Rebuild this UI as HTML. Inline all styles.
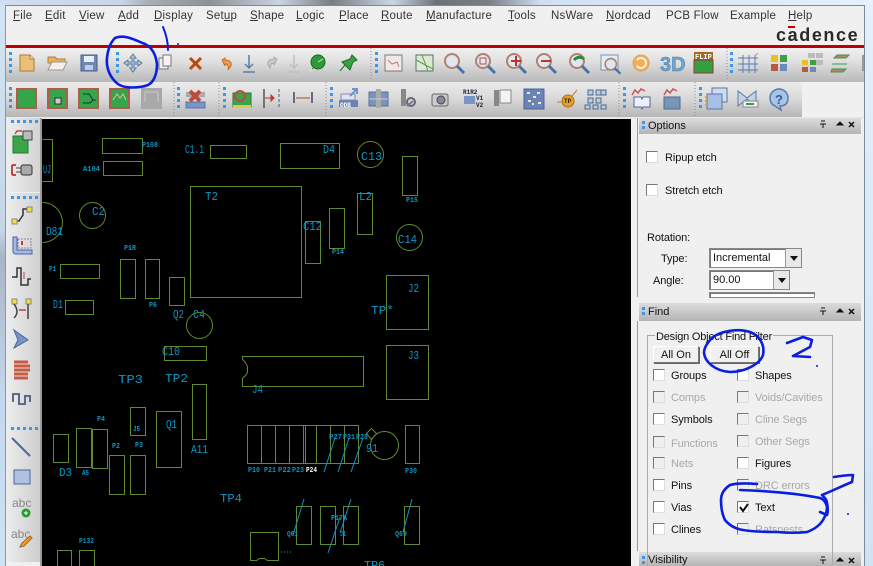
<!DOCTYPE html>
<html><head><meta charset="utf-8"><style>
html,body{margin:0;padding:0;background:#f0f0f0}
#r{position:relative;width:873px;height:566px;overflow:hidden;background:#f0f0f0;font-family:"Liberation Sans",sans-serif;color:#111}
#r>div,#r>svg{position:absolute}
.m{top:10px;font-size:11.5px;letter-spacing:.2px;color:#333;white-space:nowrap}
.m u{text-decoration:underline}
.l{font-size:11px;letter-spacing:-.1px;color:#111;white-space:nowrap;margin-top:1.5px}
.g{color:#a8a8a8}
.cb{width:10px;height:10px;background:#fff;border:1px solid #777;border-right-color:#ddd;border-bottom-color:#ddd}
.cd{background:#efefef}
.hd{left:639px;width:222px;background:linear-gradient(#dcdcdc,#b4b4b4);font-size:11px}
.hd span{position:absolute;left:9px;top:0;line-height:15px;color:#111;margin-top:1px}
.btn{background:#f0f0f0;border:1px solid #777;border-left-color:#fff;border-top-color:#fff;text-align:center;font-size:11px;line-height:16px;box-shadow:1px 1px 0 #666}
.dd{background:#fff;border:1px solid #888;font-size:11px;line-height:18px;padding-left:3px;box-sizing:border-box;box-shadow:inset 1px 1px 0 #777}
.ar{position:absolute;right:0;top:0;width:16px;height:100%;background:#e8e8e8;border-left:1px solid #999;box-sizing:border-box}
.ar:after{content:"";position:absolute;left:4px;top:7px;border:4px solid transparent;border-top:5px solid #111}
</style></head><body><div id="r">
<!-- glass -->
<div style="left:0;top:0;width:873px;height:5px;background:linear-gradient(90deg,#cfdff0 0,#c6d6e6 14%,#a9adb5 17%,#8e9299 24%,#c9d4e0 32%,#7a7d84 38%,#c9d6e4 45%,#6d7078 50%,#7b7f88 56%,#cfe0f2 62%,#e6f1fb 100%)"></div>
<div style="left:0;top:5px;width:5px;height:561px;background:linear-gradient(#d3e4f4,#c4d6e8 40%,#a9b5c4 45%,#c3d8ee 70%,#cfe2f5)"></div>
<div style="left:865px;top:5px;width:8px;height:561px;background:linear-gradient(#e4f0fa,#cfe3f6)"></div>
<div style="left:5px;top:5px;width:860px;height:1px;background:#7c8a98"></div>
<div style="left:5px;top:5px;width:1px;height:561px;background:#8a97a5"></div>
<div style="left:864px;top:5px;width:1px;height:561px;background:#7c8a98"></div>
<!-- menu -->
<div class="m" style="left:13px"><u>F</u>ile</div><div class="m" style="left:45px"><u>E</u>dit</div><div class="m" style="left:79px"><u>V</u>iew</div><div class="m" style="left:118px"><u>A</u>dd</div><div class="m" style="left:154px"><u>D</u>isplay</div><div class="m" style="left:206px">Set<u>u</u>p</div><div class="m" style="left:250px"><u>S</u>hape</div><div class="m" style="left:296px"><u>L</u>ogic</div><div class="m" style="left:339px"><u>P</u>lace</div><div class="m" style="left:381px"><u>R</u>oute</div><div class="m" style="left:426px"><u>M</u>anufacture</div><div class="m" style="left:508px"><u>T</u>ools</div><div class="m" style="left:551px">NsWare</div><div class="m" style="left:606px"><u>N</u>ordcad</div><div class="m" style="left:666px">PCB Flow</div><div class="m" style="left:730px">Example</div><div class="m" style="left:788px"><u>H</u>elp</div>
<div style="left:776px;top:25px;font-size:18px;font-weight:bold;letter-spacing:1.6px;color:#2a2a2a;white-space:nowrap">cadence</div>
<div style="left:788px;top:26px;width:7px;height:2px;background:#b00"></div>
<!-- red line + toolbars -->
<div style="left:6px;top:45px;width:858px;height:3px;background:#c00000"></div>
<div style="left:6px;top:48px;width:858px;height:34px;background:linear-gradient(#f0f0f0,#e0e0e0 40%,#b8b8b8)"></div>
<div style="left:6px;top:82px;width:796px;height:35px;background:linear-gradient(#ececec,#d8d8d8 50%,#b6b6b6)"></div>
<div style="left:6px;top:117px;width:858px;height:2px;background:#e8e8e8"></div>
<!-- left toolbar -->
<div style="left:6px;top:118px;width:34px;height:74px;background:linear-gradient(90deg,#ededed,#d4d4d4)"></div>
<div style="left:6px;top:193px;width:34px;height:233px;background:linear-gradient(90deg,#ededed,#d0d0d0)"></div>
<div style="left:6px;top:425px;width:34px;height:137px;background:linear-gradient(90deg,#ededed,#cdcdcd)"></div>
<div style="left:40px;top:118px;width:2px;height:448px;background:#9c9c9c"></div>
<!-- canvas -->
<div style="left:42px;top:119px;width:589px;height:447px;background:#000"></div>
<!-- right panels -->
<div style="left:637px;top:118px;width:1px;height:179px;background:#999"></div>
<div style="left:637px;top:321px;width:1px;height:230px;background:#999"></div>
<div class="hd" style="top:118px;height:16px"><span>Options</span></div>
<div class="hd" style="top:303px;height:18px"><span style="margin-top:2px">Find</span></div>
<div class="hd" style="top:552px;height:14px"><span>Visibility</span></div>
<div class="cb" style="left:646px;top:151px"></div><div class="l" style="left:665px;top:150px">Ripup etch</div>
<div class="cb" style="left:646px;top:184px"></div><div class="l" style="left:665px;top:183px">Stretch etch</div>
<div class="l" style="left:647px;top:230px">Rotation:</div>
<div class="l" style="left:661px;top:251px">Type:</div>
<div class="dd" style="left:709px;top:248px;width:93px;height:20px">Incremental<i class="ar"></i></div>
<div class="l" style="left:653px;top:273px">Angle:</div>
<div class="dd" style="left:709px;top:270px;width:81px;height:20px">90.00<i class="ar"></i></div>
<div class="dd" style="left:709px;top:292px;width:106px;height:6px"></div>
<!-- find group -->
<div style="left:647px;top:335px;width:186px;height:231px;border:1px solid #aaa;border-bottom:0;box-sizing:border-box"></div>
<div class="l" style="left:655px;top:329px;background:#f0f0f0;padding:0 1px;letter-spacing:-.2px">Design Object Find Filter</div>
<div class="btn" style="left:653px;top:346px;width:44px;height:15px">All On</div>
<div class="btn" style="left:710px;top:346px;width:47px;height:15px">All Off</div>
<div class="cb" style="left:653px;top:369px"></div><div class="l" style="left:671px;top:368px">Groups</div>
<div class="cb cd" style="left:653px;top:391px"></div><div class="l g" style="left:671px;top:390px">Comps</div>
<div class="cb" style="left:653px;top:413px"></div><div class="l" style="left:671px;top:412px">Symbols</div>
<div class="cb cd" style="left:653px;top:436px"></div><div class="l g" style="left:671px;top:436px">Functions</div>
<div class="cb cd" style="left:653px;top:457px"></div><div class="l g" style="left:671px;top:456px">Nets</div>
<div class="cb" style="left:653px;top:479px"></div><div class="l" style="left:671px;top:478px">Pins</div>
<div class="cb" style="left:653px;top:501px"></div><div class="l" style="left:671px;top:500px">Vias</div>
<div class="cb" style="left:653px;top:523px"></div><div class="l" style="left:671px;top:522px">Clines</div>
<div class="cb" style="left:737px;top:369px"></div><div class="l" style="left:755px;top:368px">Shapes</div>
<div class="cb cd" style="left:737px;top:391px"></div><div class="l g" style="left:755px;top:390px">Voids/Cavities</div>
<div class="cb cd" style="left:737px;top:413px"></div><div class="l g" style="left:755px;top:412px">Cline Segs</div>
<div class="cb cd" style="left:737px;top:435px"></div><div class="l g" style="left:755px;top:434px">Other Segs</div>
<div class="cb" style="left:737px;top:457px"></div><div class="l" style="left:755px;top:456px">Figures</div>
<div class="cb cd" style="left:737px;top:479px"></div><div class="l g" style="left:755px;top:478px">DRC errors</div>
<div class="cb" style="left:737px;top:501px"></div><div class="l" style="left:755px;top:500px">Text</div>
<div class="cb cd" style="left:737px;top:523px"></div><div class="l g" style="left:755px;top:522px">Ratsnests</div>

<svg style="left:0;top:0" width="873" height="566" viewBox="0 0 873 566" font-family="Liberation Mono,monospace">
<defs>
<g id="mag"><circle cx="-2" cy="-2" r="7" fill="#dfe6ee" stroke="#b08070" stroke-width="2"/><path d="M3 3l7 7" stroke="#4a72a8" stroke-width="3"/></g>
<g id="hnd" fill="#3a96ee"><rect x="0" y="0" width="3" height="3"/><rect x="0" y="6" width="3" height="3"/><rect x="0" y="12" width="3" height="3"/><rect x="0" y="18" width="3" height="3"/></g>
<g id="hndh" fill="#3a96ee"><rect x="0" y="0" width="3" height="3"/><rect x="6" y="0" width="3" height="3"/><rect x="12" y="0" width="3" height="3"/><rect x="18" y="0" width="3" height="3"/><rect x="24" y="0" width="3" height="3"/></g>
</defs>
<!-- toolbar handles -->
<use href="#hnd" x="9" y="52"/><use href="#hnd" x="116" y="52"/><use href="#hnd" x="375" y="52"/><use href="#hnd" x="730" y="52"/>
<use href="#hnd" x="9" y="87"/><use href="#hnd" x="177" y="87"/><use href="#hnd" x="223" y="87"/><use href="#hnd" x="330" y="87"/><use href="#hnd" x="623" y="87"/><use href="#hnd" x="699" y="87"/>
<use href="#hndh" x="11" y="120"/><use href="#hndh" x="11" y="196"/><use href="#hndh" x="11" y="427"/>
<path d="M371 48v33M727 48v33M174 82v35M219 82v35M326 82v35M619 82v35M695 82v35" stroke="#8e8e9e" stroke-dasharray="1 2"/>
<!-- toolbar 1 icons -->
<path d="M20 55h10l4 4v12H20z" fill="#e8c078" stroke="#b07830"/><path d="M30 55v4h4" fill="#f8e8c0" stroke="#b07830"/>
<path d="M48 57h7l2 2h8v4H48z" fill="#e8b060" stroke="#b08040"/><path d="M48 70l4-8h15l-4 8z" fill="#f4f0e4" stroke="#999"/>
<rect x="81" y="55" width="16" height="16" fill="#6e86b8" stroke="#4a5f8c"/><rect x="84" y="56" width="10" height="6" fill="#e8eef8"/><rect x="85" y="65" width="8" height="5" fill="#c0cce0"/>
<path d="M133 54l3 4h-2v4h4v-2l4 3-4 3v-2h-4v4h2l-3 4-3-4h2v-4h-4v2l-4-3 4-3v2h4v-4h-2z" fill="#b4cce4" stroke="#5a7a9c"/>
<rect x="159" y="58" width="9" height="11" fill="#eee" stroke="#777"/><rect x="163" y="55" width="8" height="11" fill="#f4f4f4" stroke="#777"/>
<path d="M190 58l11 11M201 58l-11 11" stroke="#b84810" stroke-width="3"/>
<path d="M222 60l3-2v2c5 0 7 3 6 6l-3 4c1-3 0-6-3-6v2z" fill="#e8a050" stroke="#c07020"/>
<path d="M249 55v12M245 64l4 4 4-4M243 72h12" stroke="#5a7ea8" stroke-width="1.5" fill="none"/>
<path d="M277 59l-3-2v2c-5 0-7 3-6 6l2 3c0-3 1-5 4-5v2z" fill="#c8c8c8" stroke="#aaa"/>
<path d="M294 55v12M290 64l4 4 4-4M288 72h12" stroke="#c0c0c0" stroke-width="1.5" fill="none"/>
<circle cx="318" cy="62" r="7" fill="#2f9a35" stroke="#166a20"/><path d="M312 68l-2 3 4-2M318 62l5-3" stroke="#d0f0d0"/>
<path d="M340 71l5-6M345 65l-3-3 8-3 2-4 5 5-4 2-3 8z" fill="#3aa040" stroke="#1e7028"/>
<rect x="385" y="55" width="17" height="16" fill="#f2e8e4" stroke="#7a7a8a"/><path d="M388 60l4 4 5-2 2 5" stroke="#b08078" fill="none"/>
<rect x="416" y="55" width="17" height="16" fill="#dcead4" stroke="#5a7070"/><path d="M416 60l17 9M422 55l6 16" stroke="#5a9a4a"/>
<use href="#mag" x="454" y="63"/><use href="#mag" x="485" y="63"/><use href="#mag" x="516" y="63"/><use href="#mag" x="546" y="63"/><use href="#mag" x="579" y="63"/>
<path d="M511 61h10M516 56v10" stroke="#c03030" stroke-width="2"/><path d="M541 61h10" stroke="#c03030" stroke-width="2"/><rect x="480" y="58" width="6" height="6" fill="none" stroke="#b05050"/>
<path d="M574 60q5-5 10-1" stroke="#2a8a40" stroke-width="3" fill="none"/>
<rect x="601" y="55" width="17" height="15" fill="#e4ecf4" stroke="#7a94b0"/><use href="#mag" x="613" y="66" transform="translate(122 13) scale(.8)"/>
<circle cx="641" cy="63" r="8" fill="#f0b060" stroke="#e0a050"/><path d="M637 60a5 5 0 1 1 0 6" stroke="#fff" stroke-width="1.5" fill="none"/>
<text x="660" y="71" font-size="20" font-weight="bold" fill="#6ea4cc" stroke="#4a80b0" stroke-width=".5" font-family="Liberation Sans,sans-serif">3D</text>
<rect x="694" y="52" width="19" height="8" fill="#a06a20"/><text x="695" y="59" font-size="7" font-weight="bold" fill="#fff">FLIP</text><rect x="694" y="60" width="19" height="13" fill="#30a040" stroke="#a03030"/>
<path d="M738 58h20M738 64h20M738 70h20M743 55v18M749 55v18M755 55v18" stroke="#5a7cb0"/><path d="M755 56l3-3" stroke="#e09040"/>
<rect x="771" y="55" width="7" height="7" fill="#e8c020"/><rect x="780" y="55" width="7" height="7" fill="#40a040"/><rect x="771" y="64" width="7" height="7" fill="#b85a40"/><rect x="780" y="64" width="7" height="7" fill="#6a8abc"/>
<rect x="802" y="60" width="6" height="5" fill="#e8c020"/><rect x="810" y="60" width="6" height="5" fill="#40a040"/><rect x="802" y="67" width="6" height="5" fill="#b85a40"/><rect x="810" y="67" width="6" height="5" fill="#6a8abc"/><rect x="808" y="53" width="7" height="5" fill="#bbb"/><rect x="816" y="53" width="7" height="5" fill="#bbb"/><rect x="816" y="60" width="7" height="5" fill="#bbb"/>
<path d="M834 58h12l3-3h-12zM832 64h15M832 69h14l-3 3h-12z" fill="#c0806a" stroke="#3a9a48"/><rect x="862" y="55" width="2" height="16" fill="#999"/>
<!-- toolbar 2 -->
<rect x="16" y="88" width="21" height="21" fill="#b05a50"/><rect x="18" y="90" width="17" height="17" fill="#36a448"/>
<rect x="47" y="88" width="21" height="21" fill="#b05a50"/><rect x="49" y="90" width="17" height="17" fill="#36a448"/><rect x="55" y="98" width="6" height="6" fill="#ccc" stroke="#333"/>
<rect x="78" y="88" width="21" height="21" fill="#b05a50"/><rect x="80" y="90" width="17" height="17" fill="#36a448"/><path d="M83 94h6l4 6h3M83 103h7l3-3" stroke="#134" fill="none"/>
<rect x="109" y="88" width="21" height="21" fill="#b05a50"/><rect x="111" y="90" width="17" height="17" fill="#36a448"/><path d="M113 100l4-6 3 4 3-4 3 6" stroke="#e8b8a0" fill="none"/>
<rect x="141" y="88" width="21" height="21" fill="#a9a9a9"/><path d="M145 102v-10h13v10" stroke="#ccc" fill="none"/>
<rect x="186" y="92" width="19" height="5" fill="#aaa"/><path d="M190 91l10 10M200 91l-10 10" stroke="#c04a40" stroke-width="4"/><rect x="186" y="102" width="19" height="6" fill="#7a94c8" stroke="#5a74a8"/>
<rect x="233" y="93" width="18" height="14" fill="#3aa548" stroke="#2a7a38"/><rect x="233" y="105" width="18" height="3" fill="#e0c850"/><circle cx="240" cy="96" r="5" fill="none" stroke="#c04a40" stroke-width="2"/>
<path d="M264 89v19" stroke="#555" stroke-width="1.5"/><path d="M265 98h9l-3-3v6l3-3" stroke="#b83a30" fill="#b83a30"/><path d="M279 89v19" stroke="#557" stroke-dasharray="3 2"/>
<path d="M294 92v11M312 92v11" stroke="#446" stroke-width="1.5"/><path d="M296 98h14" stroke="#b83a30"/>
<rect x="339" y="100" width="19" height="7" fill="#6a84b0"/><text x="340" y="107" font-size="6" font-weight="bold" fill="#fff">ODB</text><rect x="341" y="94" width="14" height="6" fill="#dfe4ec" stroke="#88a"/><path d="M350 96l6-6M352 89h5v5" stroke="#6a94d0" stroke-width="2" fill="none"/>
<rect x="369" y="92" width="19" height="14" fill="#7a94bc" stroke="#5a6f99"/><rect x="376" y="89" width="5" height="19" fill="#aaa"/><path d="M369 99h19" stroke="#ccd"/>
<rect x="401" y="89" width="5" height="17" fill="#888"/><circle cx="411" cy="102" r="4" fill="none" stroke="#667" stroke-width="2"/><path d="M407 106l6-5" stroke="#778" stroke-width="2"/>
<rect x="432" y="94" width="16" height="12" rx="2" fill="#ccc" stroke="#666"/><circle cx="441" cy="100" r="4" fill="#889" stroke="#444"/>
<text x="463" y="94" font-size="6" font-weight="bold" fill="#223">R1R2</text><text x="476" y="100" font-size="6" font-weight="bold" fill="#223">V1</text><text x="476" y="107" font-size="6" font-weight="bold" fill="#223">V2</text><rect x="464" y="96" width="11" height="8" fill="#7a94c8"/>
<rect x="494" y="90" width="5" height="16" fill="#888"/><rect x="500" y="90" width="11" height="13" fill="#f4f4f4" stroke="#888"/>
<rect x="524" y="89" width="20" height="20" fill="#6a84b8" stroke="#4a649a"/><path d="M527 93h3M533 97h3M528 101h3M537 93h3M538 103h3M532 104h2" stroke="#f0e8c0" stroke-width="2"/>
<circle cx="568" cy="101" r="6" fill="#e8a020" stroke="#a87018"/><text x="564" y="103" font-size="6" font-weight="bold" fill="#222">TP</text><path d="M557 102h5M572 96l5-6" stroke="#c08030"/>
<path d="M588 90h5v5h-5zM596 90h5v5h-5zM588 98h5v5h-5zM596 98h5v5h-5zM585 105h5v4h-5zM593 105h5v4h-5zM601 105h5v4h-5zM601 90h5v5h-5z" fill="#bcd" stroke="#4a6a90"/>
<path d="M632 95l3-5 3 3 3-4 4 2" stroke="#c05a50" fill="none" stroke-width="1.5"/><path d="M634 97h7l1 2 1-2h7v10h-7l-1 2-1-2h-7z" fill="#eef" stroke="#4a6a90"/>
<path d="M664 95l3-5 3 3 3-4 4 2" stroke="#c05a50" fill="none" stroke-width="1.5"/><rect x="664" y="97" width="16" height="12" fill="#7a94b8" stroke="#4a6a90"/>
<rect x="712" y="88" width="15" height="14" fill="#cfdcf0" stroke="#5a74a8"/><rect x="707" y="94" width="15" height="15" fill="#a8c0e8" stroke="#5a74a8"/><path d="M706 96v11" stroke="#e0a040" stroke-dasharray="2 2" stroke-width="2"/>
<path d="M738 91l9 7 9-7v15l-9-7-9 7z" fill="#c4d4e8" stroke="#5a7aa0"/><rect x="743" y="101" width="15" height="6" fill="#f0f0f0" stroke="#888"/><rect x="746" y="103" width="8" height="2" fill="#30a050"/>
<path d="M770 98a9 9 0 1 1 18 0q0 8-8 8l1 4-6-4q-5-2-5-8z" fill="#a8c4e8" stroke="#5a7aa8" stroke-width="1.5"/><text x="775" y="104" font-size="13" font-weight="bold" fill="#3a5a88" font-family="Liberation Sans,sans-serif">?</text>
<!-- left toolbar icons -->
<rect x="13" y="136" width="15" height="17" fill="#3aa548" stroke="#1e7a30"/><rect x="23" y="131" width="9" height="9" fill="#bbb" stroke="#444"/><path d="M22 131h-5l-2 3" stroke="#c04a40" fill="none" stroke-width="1.5"/>
<rect x="21" y="165" width="11" height="10" rx="2" fill="#aaa" stroke="#333"/><path d="M12 165h4M12 175h4M12 165v10" stroke="#c04a40" stroke-width="2" fill="none"/><path d="M16 168h5M16 172h5" stroke="#444"/>
<path d="M15 221h4l4-6v-6h6" stroke="#333" stroke-width="1.5" fill="none"/><rect x="12" y="219" width="5" height="5" fill="#f0e040" stroke="#888"/><rect x="27" y="207" width="5" height="5" fill="#f0e040" stroke="#888"/>
<path d="M13 237v14q0 3 3 3h16v-4H17v-13z" fill="#a8b8e0" stroke="#4a64a0"/><rect x="18" y="239" width="13" height="9" fill="none" stroke="#88a" stroke-dasharray="2 1"/><path d="M22 241v4" stroke="#c04040" stroke-width="2"/>
<path d="M12 277h5v-9h4v17h7v-6h3" stroke="#333" stroke-width="1.5" fill="none"/><path d="M24 272v7" stroke="#c04040"/>
<rect x="12" y="299" width="5" height="5" fill="#f0e040" stroke="#888"/><rect x="26" y="299" width="5" height="5" fill="#f0e040" stroke="#888"/><path d="M14 304q6 8 0 14M28 304v15" stroke="#444" stroke-width="1.5" fill="none"/><path d="M19 310h7" stroke="#c04040" stroke-width="1.5"/>
<path d="M14 330l14 10-14 8 4-8z" fill="#7a94c8" stroke="#4a64a0"/>
<path d="M14 362h14M14 366h16M14 370h16M14 374h14M14 378h14" stroke="#c85a40" stroke-width="3"/>
<path d="M13 402v-8h6v10h6v-8h5v6" stroke="#5a6a88" stroke-width="2" fill="none"/>
<path d="M12 438l18 18" stroke="#4a6a9c" stroke-width="2"/>
<rect x="14" y="470" width="16" height="14" fill="#b0c0e0" stroke="#4a64a0"/>
<text x="12" y="507" font-size="12" fill="#888" font-family="Liberation Sans,sans-serif">abc</text><circle cx="26" cy="513" r="4.5" fill="#2a9a30"/><path d="M24 513h4M26 511v4" stroke="#fff"/>
<text x="11" y="538" font-size="12" fill="#888" font-family="Liberation Sans,sans-serif">abc</text><path d="M20 547l2-4 8-7 2 2-8 8z" fill="#f0a030" stroke="#a06020"/>
<!-- panel header icons -->
<g id="hi" stroke="#111" fill="#111"><path d="M820 124h6M823 124v4M821 121h4" stroke-width="1" fill="none"/><path d="M837 125l3-3 3 3z"/><path d="M849 122l5 5M854 122l-5 5" stroke-width="1.5"/></g>
<use href="#hi" y="187"/><use href="#hi" y="436"/>
<rect x="642" y="121" width="3" height="3" fill="#3a96ee"/><rect x="642" y="126" width="3" height="3" fill="#3a96ee"/>
<rect x="642" y="307" width="3" height="3" fill="#3a96ee"/><rect x="642" y="312" width="3" height="3" fill="#3a96ee"/>
<rect x="642" y="556" width="3" height="3" fill="#3a96ee"/><rect x="642" y="561" width="3" height="3" fill="#3a96ee"/>
<path d="M740 507l3 4 5-7" stroke="#111" stroke-width="2" fill="none"/>
<!-- PCB -->
<g fill="none" stroke="#5f8a2f" stroke-width="1" transform="translate(.5 .5)">
<path d="M42 139h10v42H42"/><rect x="102" y="138" width="40" height="15"/><rect x="103" y="161" width="39" height="14"/><rect x="210" y="145" width="36" height="13"/><rect x="190" y="186" width="111" height="111"/><rect x="280" y="143" width="59" height="25"/>
<circle cx="370" cy="154" r="13"/><rect x="402" y="156" width="15" height="39"/><rect x="357" y="193" width="15" height="41"/><rect x="329" y="208" width="15" height="40"/><rect x="305" y="221" width="15" height="42"/><circle cx="409" cy="237" r="13"/><rect x="386" y="275" width="42" height="54"/>
<path d="M42 202a20 20 0 0 1 0 40"/><circle cx="92" cy="215" r="13"/><rect x="60" y="264" width="39" height="14"/><rect x="120" y="259" width="15" height="39"/><rect x="145" y="259" width="14" height="39"/><rect x="169" y="277" width="15" height="28"/><rect x="65" y="300" width="28" height="14"/><circle cx="199" cy="325" r="13"/>
<rect x="164" y="346" width="42" height="14"/><rect x="192" y="384" width="14" height="55"/><rect x="156" y="411" width="25" height="56"/><rect x="130" y="407" width="15" height="28"/><rect x="53" y="434" width="15" height="28"/><rect x="76" y="428" width="15" height="39"/><rect x="92" y="429" width="15" height="39"/><rect x="109" y="455" width="15" height="39"/><rect x="130" y="455" width="15" height="39"/>
<path d="M57 566v-16h14v16M79 566v-16h15v16"/>
<rect x="386" y="345" width="42" height="54"/>
<path d="M242 356h121v30H242v-8l3-3 2-3v-6l-2-4-3-3z"/>
<path d="M247 425h111v38H247zM261 425v38M275 425v38M289 425v38M303 425v38M305 425v38M316 425v38M330 425v38M344 425v38"/>
<circle cx="384" cy="445" r="14"/><path d="M366 433l5-5 5 5-5 6z"/><rect x="405" y="425" width="14" height="38"/>
<rect x="296" y="506" width="15" height="38"/><rect x="320" y="506" width="15" height="38"/><rect x="343" y="506" width="15" height="38"/><rect x="404" y="506" width="15" height="38"/>
<path d="M250 532h28v28h-11l-3-2h-5l-3 2h-6z"/>
</g>
<g fill="none" stroke="#0b96c4" stroke-width="1">
<path d="M324 472l11-34M338 472l11-34M351 472l12-34M293 535l11-36M328 553l12-36M340 533l11-34M403 532l9-33"/>
</g>
<path d="M278 552h1M281 552h1M284 552h1M287 552h1M290 552h1" stroke="#5f8a2f"/>
<g fill="#0b96c4" font-size="12">
<text x="185" y="153" textLength="19" lengthAdjust="spacingAndGlyphs">C1.1</text>
<text x="323" y="153" textLength="12" lengthAdjust="spacingAndGlyphs">D4</text>
<text x="361" y="160" textLength="21" lengthAdjust="spacingAndGlyphs">C13</text>
<text x="43" y="173" textLength="8" lengthAdjust="spacingAndGlyphs">UJ</text>
<text x="205" y="200" textLength="13" lengthAdjust="spacingAndGlyphs">T2</text>
<text x="46" y="235" textLength="17" lengthAdjust="spacingAndGlyphs">D81</text>
<text x="92" y="215" textLength="13" lengthAdjust="spacingAndGlyphs">C2</text>
<text x="303" y="230" textLength="19" lengthAdjust="spacingAndGlyphs">C12</text>
<text x="398" y="243" textLength="19" lengthAdjust="spacingAndGlyphs">C14</text>
<text x="359" y="200" textLength="13" lengthAdjust="spacingAndGlyphs">L2</text>
<text x="371" y="314" textLength="23" lengthAdjust="spacingAndGlyphs">TP*</text>
<text x="408" y="292" textLength="11" lengthAdjust="spacingAndGlyphs">J2</text>
<text x="408" y="359" textLength="11" lengthAdjust="spacingAndGlyphs">J3</text>
<text x="53" y="308" textLength="10" lengthAdjust="spacingAndGlyphs">D1</text>
<text x="173" y="318" textLength="11" lengthAdjust="spacingAndGlyphs">Q2</text>
<text x="193" y="318" textLength="12" lengthAdjust="spacingAndGlyphs">C4</text>
<text x="162" y="355" textLength="18" lengthAdjust="spacingAndGlyphs">C10</text>
<text x="118" y="383" textLength="25" lengthAdjust="spacingAndGlyphs">TP3</text>
<text x="165" y="382" textLength="23" lengthAdjust="spacingAndGlyphs">TP2</text>
<text x="166" y="428" textLength="11" lengthAdjust="spacingAndGlyphs">Q1</text>
<text x="191" y="453" textLength="17" lengthAdjust="spacingAndGlyphs">A11</text>
<text x="59" y="476" textLength="13" lengthAdjust="spacingAndGlyphs">D3</text>
<text x="220" y="502" textLength="22" lengthAdjust="spacingAndGlyphs">TP4</text>
<text x="366" y="452" textLength="12" lengthAdjust="spacingAndGlyphs">91</text>
<text x="252" y="393" textLength="11" lengthAdjust="spacingAndGlyphs">J4</text>
<text x="364" y="569" textLength="21" lengthAdjust="spacingAndGlyphs">TP6</text>
</g>
<g fill="#0b96c4" font-size="7" font-weight="bold">
<text x="142" y="147" textLength="16" lengthAdjust="spacingAndGlyphs">P108</text>
<text x="83" y="171" textLength="17" lengthAdjust="spacingAndGlyphs">A104</text>
<text x="124" y="250" textLength="12" lengthAdjust="spacingAndGlyphs">P1R</text>
<text x="49" y="271" textLength="7" lengthAdjust="spacingAndGlyphs">P1</text>
<text x="149" y="307" textLength="8" lengthAdjust="spacingAndGlyphs">P6</text>
<text x="406" y="202" textLength="12" lengthAdjust="spacingAndGlyphs">P15</text>
<text x="332" y="254" textLength="12" lengthAdjust="spacingAndGlyphs">P14</text>
<text x="97" y="421" textLength="8" lengthAdjust="spacingAndGlyphs">P4</text>
<text x="112" y="448" textLength="8" lengthAdjust="spacingAndGlyphs">P2</text>
<text x="135" y="447" textLength="8" lengthAdjust="spacingAndGlyphs">P3</text>
<text x="82" y="475" textLength="7" lengthAdjust="spacingAndGlyphs">A5</text>
<text x="133" y="431" textLength="7" lengthAdjust="spacingAndGlyphs">J5</text>
<text x="79" y="543" textLength="15" lengthAdjust="spacingAndGlyphs">P132</text>
<text x="248" y="472" textLength="12" lengthAdjust="spacingAndGlyphs">P10</text>
<text x="264" y="472" textLength="12" lengthAdjust="spacingAndGlyphs">P21</text>
<text x="278" y="472" textLength="13" lengthAdjust="spacingAndGlyphs">P22</text>
<text x="292" y="472" textLength="12" lengthAdjust="spacingAndGlyphs">P23</text>
<text x="306" y="472" textLength="11" lengthAdjust="spacingAndGlyphs" fill="#fff">P24</text>
<text x="329" y="439" textLength="13" lengthAdjust="spacingAndGlyphs">P27</text>
<text x="343" y="439" textLength="12" lengthAdjust="spacingAndGlyphs">P31</text>
<text x="356" y="439" textLength="12" lengthAdjust="spacingAndGlyphs">P28</text>
<text x="405" y="473" textLength="12" lengthAdjust="spacingAndGlyphs">P30</text>
<text x="287" y="536" textLength="11" lengthAdjust="spacingAndGlyphs">Q61</text>
<text x="331" y="520" textLength="16" lengthAdjust="spacingAndGlyphs">P17A</text>
<text x="340" y="536" textLength="6" lengthAdjust="spacingAndGlyphs">J1</text>
<text x="395" y="536" textLength="12" lengthAdjust="spacingAndGlyphs">Q69</text>
</g>
<!-- annotations -->
<g fill="none" stroke="#0a1ee0" stroke-width="2.6" stroke-linecap="round" stroke-linejoin="round">
<path d="M115 38C124 34 135 40 145 44C153 48 156 56 157 64C157 74 154 82 148 85C140 88 125 89 118 84C110 78 106 68 107 58C108 48 111 42 115 38"/>
<path d="M163 27C166 34 168 42 168 50" stroke-width="2"/>
<path d="M712 338C720 331 738 328 750 332C760 336 765 345 763 355C760 364 745 372 730 372C715 371 705 362 704 353C704 347 708 342 712 338"/>
<path d="M787 343L803 337L812 340L810 347L793 356L810 357"/>
<path d="M757 484C745 483 737 483 730 485C724 489 721 494 721 500C721 508 722 514 725 520C730 526 736 529 743 530C755 532 766 532 777 532C788 533 798 533 807 532C815 529 820 525 823 520C826 515 827 511 827 507C826 502 823 499 820 498C800 494 770 491 740 490"/>
<path d="M834 477C840 476 847 475 853 475L852 482C842 486 832 491 822 495C825 498 827 500 827 503C828 508 828 512 827 515L820 512"/>
</g>
<g fill="#0a1ee0"><circle cx="178" cy="44" r="1"/><circle cx="817" cy="366" r="1"/><circle cx="848" cy="514" r="1"/></g>
</svg>
</div></body></html>
